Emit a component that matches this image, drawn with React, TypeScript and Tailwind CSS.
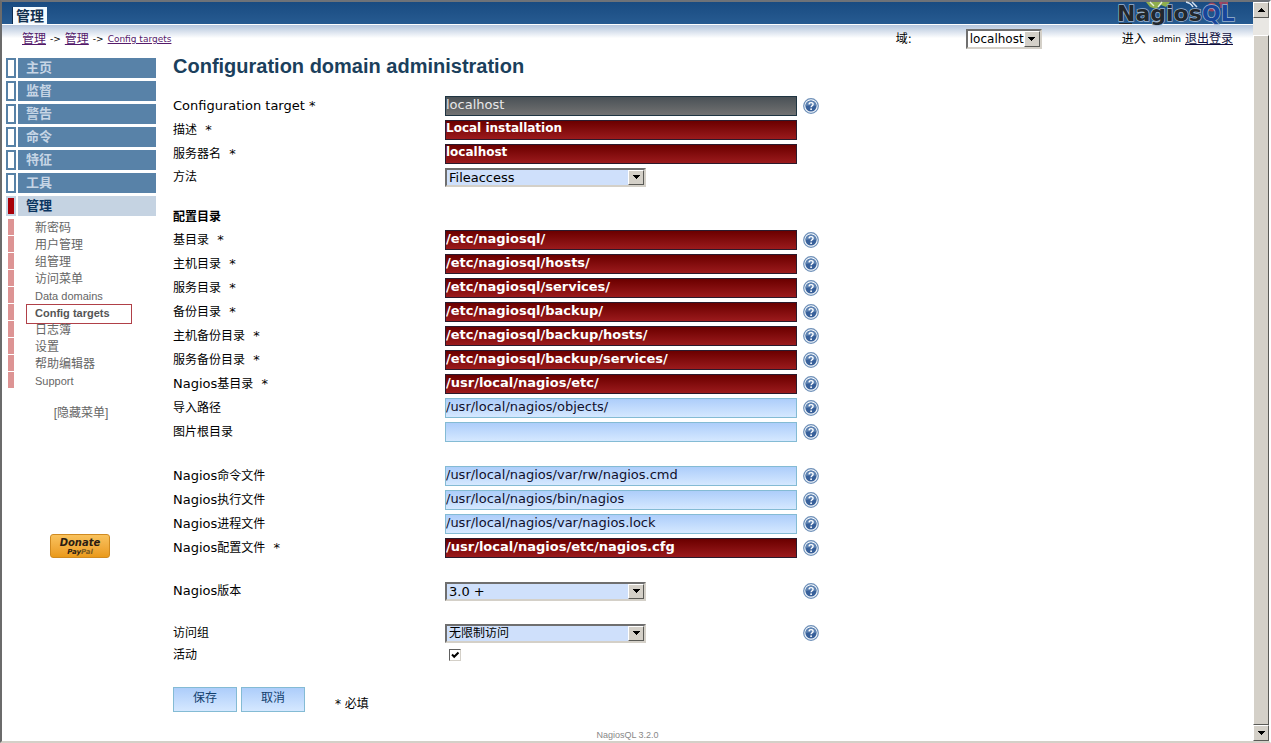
import React, { useState } from 'react'

type FieldKind = 'locked' | 'required' | 'path' | 'optional'

interface Field {
  id: string
  prefix?: string
  label?: string
  required?: boolean
  value: string
  kind: FieldKind
  help?: boolean
}

const FIELD_STYLES: Record<FieldKind, string> = {
  locked: 'border-[#1f3542] bg-linear-to-b from-[#4a5156] to-[#727272] text-[13px] text-[#e8e8e8]',
  required: 'border-[#2b1a2c] bg-linear-to-b from-[#6b0000] to-[#9b1a1c] text-xs font-bold text-white',
  path: 'border-[#2b1a2c] bg-linear-to-b from-[#6b0000] to-[#9b1a1c] text-[13px] font-bold text-white',
  optional: 'border-[#84bbd4] bg-linear-to-b from-[#adcdfa] to-[#d5e8ff] text-[13px] text-[#10102c]'
}

const menu = ['主页', '监督', '警告', '命令', '特征', '工具']

const submenu = [
  '新密码',
  '用户管理',
  '组管理',
  '访问菜单',
  'Data domains',
  'Config targets',
  '日志簿',
  '设置',
  '帮助编辑器',
  'Support'
]

const targetFields: Field[] = [
  { id: 'target', prefix: 'Configuration target', required: true, value: 'localhost', kind: 'locked', help: true },
  { id: 'description', label: '描述', required: true, value: 'Local installation', kind: 'required' },
  { id: 'server', label: '服务器名', required: true, value: 'localhost', kind: 'required' }
]

const directoryFields: Field[] = [
  { id: 'base', label: '基目录', required: true, value: '/etc/nagiosql/', kind: 'path', help: true },
  { id: 'host', label: '主机目录', required: true, value: '/etc/nagiosql/hosts/', kind: 'path', help: true },
  { id: 'service', label: '服务目录', required: true, value: '/etc/nagiosql/services/', kind: 'path', help: true },
  { id: 'backup', label: '备份目录', required: true, value: '/etc/nagiosql/backup/', kind: 'path', help: true },
  { id: 'hostBackup', label: '主机备份目录', required: true, value: '/etc/nagiosql/backup/hosts/', kind: 'path', help: true },
  { id: 'serviceBackup', label: '服务备份目录', required: true, value: '/etc/nagiosql/backup/services/', kind: 'path', help: true },
  { id: 'nagiosBase', prefix: 'Nagios', label: '基目录', required: true, value: '/usr/local/nagios/etc/', kind: 'path', help: true },
  { id: 'import', label: '导入路径', value: '/usr/local/nagios/objects/', kind: 'optional', help: true },
  { id: 'picture', label: '图片根目录', value: '', kind: 'optional', help: true }
]

const nagiosFields: Field[] = [
  { id: 'command', prefix: 'Nagios', label: '命令文件', value: '/usr/local/nagios/var/rw/nagios.cmd', kind: 'optional', help: true },
  { id: 'binary', prefix: 'Nagios', label: '执行文件', value: '/usr/local/nagios/bin/nagios', kind: 'optional', help: true },
  { id: 'process', prefix: 'Nagios', label: '进程文件', value: '/usr/local/nagios/var/nagios.lock', kind: 'optional', help: true },
  { id: 'config', prefix: 'Nagios', label: '配置文件', required: true, value: '/usr/local/nagios/etc/nagios.cfg', kind: 'path', help: true }
]

const HelpIcon: React.FC = () => (
  <button type="button" aria-label="Help" className="ml-[6px] size-4 shrink-0 cursor-pointer">
    <svg viewBox="0 0 16 16" className="size-4">
      <circle cx="8" cy="8" r="7.3" fill="#f6fafd" stroke="#6d8fb8" strokeWidth="1.2" />
      <circle cx="8" cy="8" r="5.6" fill="#38609a" />
      <path d="M2.5 8a5.5 5.5 0 0 1 11 0Q8 6.6 2.5 8Z" fill="#5f84b3" />
      <path d="M6 6.4Q6.1 4.6 8.1 4.6T10.1 6.3Q10.1 7.2 9 7.8 8.1 8.3 8.1 9.3" fill="none" stroke="#fff" strokeWidth="1.4" />
      <circle cx="8.1" cy="11.2" r="0.9" fill="#fff" />
    </svg>
  </button>
)

const Arrow: React.FC<{ up?: boolean }> = ({ up }) => (
  <svg viewBox="0 0 7 4" className="h-1 w-[7px]" shapeRendering="crispEdges">
    <path d={up ? 'M0 4h7L3.5 0z' : 'M0 0h7L3.5 4z'} fill="#000" />
  </svg>
)

const BEVEL = 'border border-t-white border-l-white border-r-[#5a5a56] border-b-[#5a5a56] bg-[#d4d0c8]'

interface DropDownProps {
  id: string
  value: string
  className: string
}

const DropDown: React.FC<DropDownProps> = ({ id, value, className }) => (
  <div className={`relative ${className}`}>
    <select
      id={id}
      className="block size-full appearance-none border-2 border-t-[#6f6f6f] border-r-[#d4d0c8] border-b-[#d4d0c8] border-l-[#6f6f6f] bg-inherit pl-[2px] leading-none"
    >
      <option>{value}</option>
    </select>
    <span className={`pointer-events-none absolute inset-y-[2px] right-[2px] flex w-4 items-center justify-center ${BEVEL}`}>
      <Arrow />
    </span>
  </div>
)

interface RowProps {
  id: string
  prefix?: string
  label?: string
  required?: boolean
  help?: boolean
  children: React.ReactNode
}

const Row: React.FC<RowProps> = ({ id, prefix, label, required, help, children }) => (
  <div className="flex h-6 items-center">
    <label htmlFor={id} className="w-[272px] shrink-0">
      {prefix && <span className="text-[13px]">{prefix}</span>}
      {label}
      {required && <span className="text-[13px]">{label ? '\u00a0 *' : ' *'}</span>}
    </label>
    <div className="w-[352px] shrink-0">{children}</div>
    {help && <HelpIcon />}
  </div>
)

const FieldRow: React.FC<{ field: Field }> = ({ field }) => (
  <Row {...field}>
    <input
      id={field.id}
      type="text"
      defaultValue={field.value}
      readOnly={field.kind === 'locked'}
      className={`block h-5 w-full border pb-1 leading-4 outline-none ${FIELD_STYLES[field.kind]}`}
    />
  </Row>
)

const Sidebar: React.FC = () => (
  <nav className="w-[150px] shrink-0">
    <ul className="space-y-[3px]">
      {menu.map(item => (
        <li key={item} className="flex h-5 gap-[2px]">
          <span className="w-[10px] border-2 border-[#5781a6] bg-white"></span>
          <a href="#" className="flex flex-1 items-center bg-[#5882a8] pl-2 text-[13px] font-bold text-[#c6d5e5]">
            {item}
          </a>
        </li>
      ))}
      <li className="flex h-5 gap-[2px]">
        <span className="w-[10px] border-2 border-[#c5d3e2] bg-[#a80008]"></span>
        <a href="#" className="flex flex-1 items-center bg-[#c5d3e2] pl-2 text-[13px] font-bold text-[#0b3561]">
          管理
        </a>
      </li>
    </ul>

    {/* submenu */}
    <ul className="mt-[3px] ml-[2px] font-['Liberation_Sans','Noto_Sans_CJK_SC',sans-serif] text-[#666]">
      {submenu.map(item => (
        <li key={item} className="relative flex h-[17px] items-center">
          <span className="mr-[21px] h-4 w-[6px] self-start bg-[#dd9494]"></span>
          <a
            href="#"
            className={`leading-4 ${/[a-z]/.test(item) ? 'text-[11px]' : 'text-xs'} ${item === 'Config targets' ? 'font-bold text-[#555]' : ''}`}
          >
            {item}
          </a>
          {item === 'Config targets' && (
            <span className="pointer-events-none absolute top-0 left-[18px] h-5 w-[106px] border border-[#b04048]"></span>
          )}
        </li>
      ))}
    </ul>

    <a href="#" className="mt-4 block text-center font-['Liberation_Sans','Noto_Sans_CJK_SC',sans-serif] text-xs leading-4 text-[#666]">
      [隐藏菜单]
    </a>

    <button
      type="button"
      className="mt-[113px] ml-11 block h-6 w-[60px] rounded-[3px] border border-[#d08a20] bg-linear-to-b from-[#f9c25c] to-[#ea9a18] font-['DejaVu_Sans',sans-serif] font-bold text-[#2a1c12] italic"
    >
      <span className="block text-[10px] leading-[13px]">Donate</span>
      <span className="block text-[7px] leading-[7px]">
        Pay<span className="text-[#7a5a20]">Pal</span>
      </span>
    </button>
  </nav>
)

const ScrollBar: React.FC = () => (
  <div aria-hidden="true" className="flex w-4 shrink-0 flex-col bg-[#e9e7e3]">
    <span className={`flex h-4 items-center justify-center ${BEVEL}`}>
      <Arrow up />
    </span>
    <span className={`mt-[17px] flex-1 ${BEVEL}`}></span>
    <span className={`flex h-4 items-center justify-center ${BEVEL}`}>
      <Arrow />
    </span>
  </div>
)

const Logo: React.FC = () => (
  <svg viewBox="0 0 128 28" className="-mb-1 h-7 w-32" role="img" aria-label="NagiosQL">
    <path d="M30 2h24l-4 5-5-2-5 4-6-2z" fill="#8fae4c" />
    <path d="M34 2l4 4M46 2l-4 5" stroke="#e8efda" strokeWidth="1.4" />
    <path d="M70 2q5 1 7 5M76 2l5 5" stroke="#d6e2f0" strokeWidth="1.5" fill="none" />
    <circle cx="96" cy="7" r="4.5" fill="#9c4055" />
    <path d="M103 3h9M105 2v6M111 2v6" stroke="#b0465c" strokeWidth="1.4" />
    <g
      fontFamily="DejaVu Sans, sans-serif"
      fontSize="22"
      fontWeight="bold"
      stroke="#9db4cf"
      strokeWidth="1.4"
      paintOrder="stroke"
    >
      <text x="1" y="21" fill="#22272d">Nagios</text>
      <text x="86" y="21" fill="#17469a">QL</text>
    </g>
    <path d="M3 23.5h13" stroke="#22272d" strokeWidth="1" />
  </svg>
)

export default function App() {
  const [active, setActive] = useState(true)

  return (
    <div className="flex min-h-screen border-t-2 border-r-2 border-b-2 border-l-2 border-t-[#6e7278] border-r-white border-b-[#d4d0c8] border-l-[#6b6b6b] bg-white font-['DejaVu_Sans','Noto_Sans_CJK_SC',sans-serif] text-xs text-black">
      <div className="flex min-w-0 flex-1 flex-col">
        <header className="relative z-10 flex h-[22px] items-end justify-between bg-linear-to-b from-[#194b81] to-[#275b91] pr-[9px] pl-[10px]">
          <a href="#" className="flex h-[17px] items-center border-l border-[#0c2c50] bg-[#f4fbff] px-[3px] text-sm font-bold text-[#12304e]">
            管理
          </a>
          <Logo />
        </header>

        <div className="flex h-[34px] items-center border-t border-white bg-linear-to-b from-[#b4c5dc] to-white to-40% pr-5 pb-[6px] pl-5">
          <div className="flex flex-1 items-center gap-1 text-[#551a6b]">
            <a href="#" className="underline">管理</a>
            <span className="text-[9px] text-black">-&gt;</span>
            <a href="#" className="underline">管理</a>
            <span className="text-[9px] text-black">-&gt;</span>
            <a href="#" className="text-[9px] underline">Config targets</a>
          </div>
          <label htmlFor="domain" className="w-[70px]">域:</label>
          <DropDown id="domain" value="localhost" className="h-5 w-[76px] bg-white" />
          <div className="ml-20 flex items-center">
            <span>进入</span>
            <span className="mr-1 ml-[7px] text-[9px]">admin</span>
            <a href="#" className="text-[#101040] underline">退出登录</a>
          </div>
        </div>

        <div className="flex pl-1">
          <Sidebar />
          <main className="ml-[17px] flex-1">
            <h1 className="-mt-1 font-['Liberation_Sans',sans-serif] text-xl leading-6 font-bold text-[#1b3f5c]">
              Configuration domain administration
            </h1>

            <form className="mt-4" onSubmit={e => e.preventDefault()}>
              {targetFields.map(field => (
                <FieldRow key={field.id} field={field} />
              ))}
              <div className="-mt-px">
                <Row id="method" label="方法">
                  <DropDown id="method" value="Fileaccess" className="h-[19px] w-[201px] bg-[#cfe0fb] text-[13px]" />
                </Row>
              </div>

              <h2 className="mt-[17px] h-[22px] text-xs leading-[22px] font-bold">配置目录</h2>
              {directoryFields.map(field => (
                <FieldRow key={field.id} field={field} />
              ))}

              <div className="mt-5">
                {nagiosFields.map(field => (
                  <FieldRow key={field.id} field={field} />
                ))}
              </div>

              <div className="mt-[19px] space-y-[18px]">
                <Row id="version" prefix="Nagios" label="版本" help>
                  <DropDown id="version" value="3.0 +" className="h-[19px] w-[201px] bg-[#cfe0fb] text-[13px]" />
                </Row>
                <Row id="group" label="访问组" help>
                  <DropDown id="group" value="无限制访问" className="h-[19px] w-[201px] bg-[#cfe0fb]" />
                </Row>
              </div>

              <div className="flex h-5 items-center">
                <label htmlFor="active" className="w-[272px]">活动</label>
                <div className="relative ml-1 size-3">
                  <input
                    id="active"
                    type="checkbox"
                    checked={active}
                    onChange={() => setActive(!active)}
                    className="block size-3 appearance-none border border-t-[#606060] border-r-[#d4d0c8] border-b-[#d4d0c8] border-l-[#606060] bg-white"
                  />
                  {active && (
                    <svg viewBox="0 0 12 12" className="pointer-events-none absolute inset-0">
                      <path d="M3 5.5l2.2 2.3L9.5 3.5" fill="none" stroke="#000" strokeWidth="2" />
                    </svg>
                  )}
                </div>
              </div>

              <div className="mt-[22px] flex gap-1">
                <button type="submit" className="h-[25px] w-16 border border-[#84bbd4] bg-linear-to-b from-[#adcdfa] to-[#d5e8ff] pb-1 text-[#12406e]">
                  保存
                </button>
                <button type="button" className="h-[25px] w-16 border border-[#84bbd4] bg-linear-to-b from-[#adcdfa] to-[#d5e8ff] pb-1 text-[#12406e]">
                  取消
                </button>
                <span className="mt-[9px] ml-[26px] leading-4">* 必填</span>
              </div>
            </form>
          </main>
        </div>

        <footer className="mt-auto text-center font-['Liberation_Sans',sans-serif] text-[9px] leading-3 text-[#888]">
          NagiosQL 3.2.0
        </footer>
      </div>
      <ScrollBar />
    </div>
  )
}
